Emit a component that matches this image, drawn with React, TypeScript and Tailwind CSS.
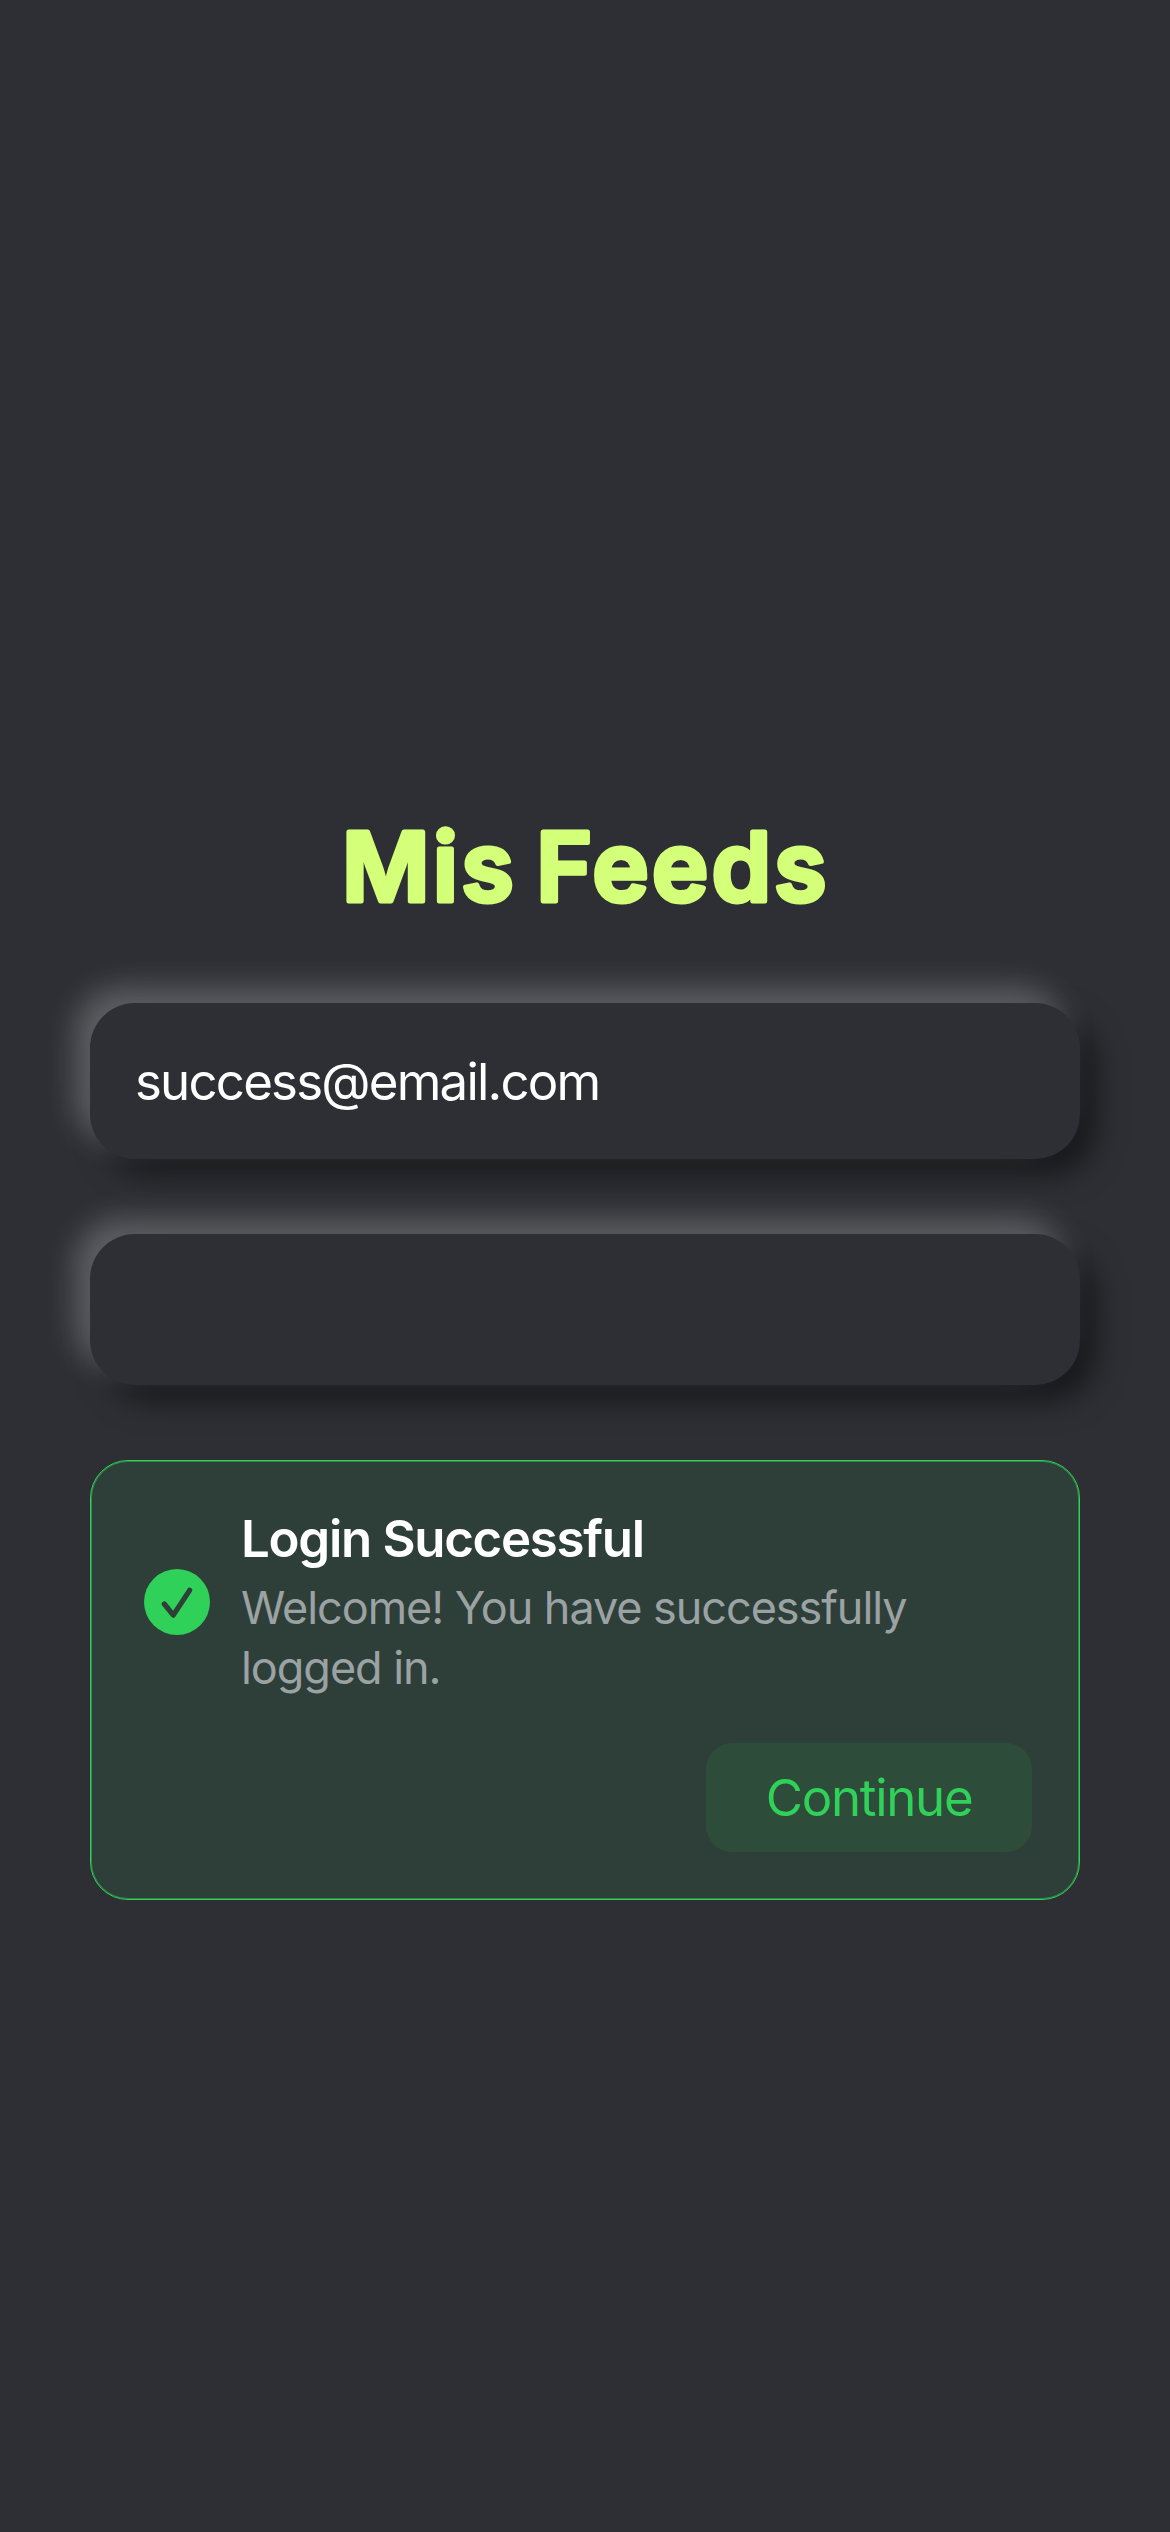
import React from "react";

const surface = "bg-[#2e2f34] shadow-[-15px_-15px_30px_rgba(255,255,255,0.24),15px_15px_30px_rgba(0,0,0,0.5)]";

function SuccessIcon() {
  return (
    <svg viewBox="0 0 66 66" className="h-[66px] w-[66px] shrink-0">
      <circle cx="33" cy="33" r="33" fill="#30d158" />
      <path d="M20.3 35 L29.3 46.2 L45.6 21.3" fill="none" stroke="#2e3e39" strokeWidth="5.2" strokeLinecap="round" strokeLinejoin="round" />
    </svg>
  );
}

function Title() {
  return (
    <h1 className="h-[134px]">
      <svg viewBox="0 0 990 134" className="h-[134px] w-[990px]">
        <text
          x="496"
          y="101"
          textAnchor="middle"
          fill="#d4ff79"
          stroke="#d4ff79"
          strokeWidth="5"
          strokeLinejoin="round"
          strokeLinecap="round"
          className="font-['Inter',sans-serif] text-[95px] font-semibold tracking-[3.4px] [word-spacing:-8px]"
        >
          Mis Feeds
        </text>
      </svg>
    </h1>
  );
}

export default function App() {
  return (
    <main className="h-[2532px] w-[1170px] overflow-hidden bg-[#2e2f34] px-[90px] pt-[800px] font-['Inter',sans-serif]">
      <Title />
      <div className={`mt-[69px] flex h-[156px] items-center rounded-[45px] px-[45px] pt-[3px] text-[51px] tracking-[-1.8px] text-white ${surface}`}>
        success@email.com
      </div>
      <div className={`mt-[75px] h-[151px] rounded-[45px] ${surface}`} />
      <section className="mt-[75px] h-[440px] rounded-[38px] border border-[#30d158] bg-[#2e3e39] px-[47px] pt-[48px] shadow-[inset_0_0_0_1px_rgba(48,209,88,0.5)]">
        <div className="flex items-center gap-[31px] pl-[6px]">
          <SuccessIcon />
          <div>
            <h2 className="-mt-[3px] text-[51px] leading-[66px] font-semibold tracking-[-1.3px] text-white">Login Successful</h2>
            <p className="mt-[6px] -mb-[3px] text-[45px] leading-[60px] tracking-[-1.05px] text-[#9ba2a3]">Welcome! You have successfully<br />logged in.</p>
          </div>
        </div>
        <div className="mt-[48px] flex justify-end">
          <button className="h-[109px] w-[326px] rounded-[26px] bg-[#2d4d3a] pt-[2px] text-[51px] tracking-[-1.3px] text-[#30d158]">Continue</button>
        </div>
      </section>
    </main>
  );
}
